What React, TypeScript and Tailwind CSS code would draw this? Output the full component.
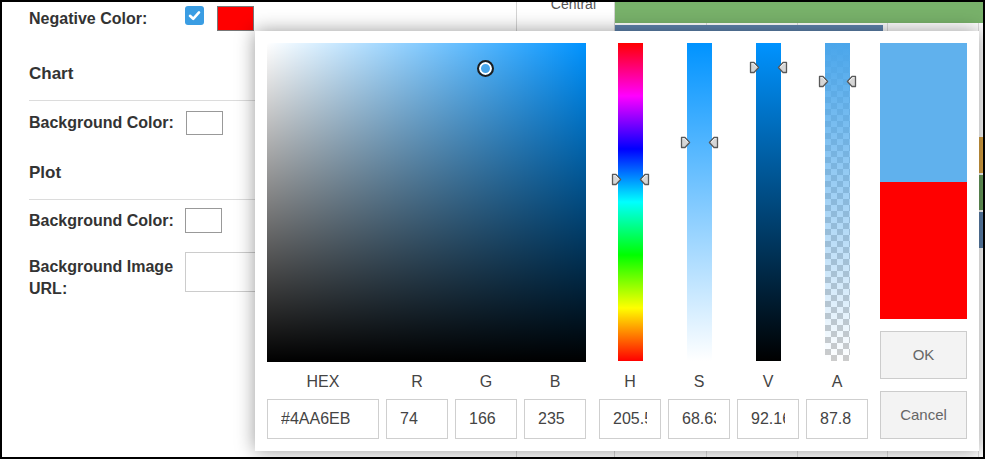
import React from 'react';

type SliderDef = { label: string; value: string; pos: number; bar: string; checker?: boolean };

const BAR_H = 318;
const SV = 319;

// picked colour #4AA6EB
const pick = { h: 205.531914893617, s: 68.6382978723404, v: 92.16, a: 87.8 };

const sliders: SliderDef[] = [
  {
    label: 'H',
    value: String(pick.h),
    pos: (1 - pick.h / 360) * BAR_H,
    bar: 'bg-[image:linear-gradient(to_bottom,#f00,#f0f,#00f,#0ff,#0f0,#ff0,#f00)]',
  },
  {
    label: 'S',
    value: String(pick.s),
    pos: (1 - pick.s / 100) * BAR_H,
    bar: 'bg-[image:linear-gradient(to_bottom,#0093ff,#ffffff)]',
  },
  {
    label: 'V',
    value: '92.1607843137255',
    pos: (1 - pick.v / 100) * BAR_H,
    bar: 'bg-[image:linear-gradient(to_bottom,#0093ff,#000000)]',
  },
  {
    label: 'A',
    value: String(pick.a),
    pos: (1 - pick.a / 100) * BAR_H,
    bar: 'bg-[image:repeating-conic-gradient(#cccccc_0_25%,#ffffff_0_50%)] bg-[length:12px_12px]',
    checker: true,
  },
];

function Handle({ className, top }: { className: string; top: number }) {
  return (
    <svg width="11" height="13" viewBox="0 0 11 13" className={className} style={{ top }}>
      <path
        d="M1.5 1.5 H5 L9.6 6.5 L5 11.5 H1.5 Z"
        fill="#d6d6d6"
        stroke="#595959"
        strokeWidth="1.3"
        strokeLinejoin="round"
      />
      <path d="M2.5 2.7 H4.6 L7.8 6.2" fill="none" stroke="#f7f7f7" strokeWidth="1" />
    </svg>
  );
}

function SliderBar({ s }: { s: SliderDef }) {
  return (
    <div className="relative h-[318px] w-[25px]">
      <div className={`h-full w-full ${s.bar}`} />
      {s.checker && (
        <div className="absolute inset-0 bg-[image:linear-gradient(to_bottom,rgb(74,166,235),rgba(74,166,235,0))]" />
      )}
      <Handle className="absolute left-[-7px]" top={s.pos - 6.5} />
      <Handle className="absolute left-[21px] -scale-x-100" top={s.pos - 6.5} />
    </div>
  );
}

function Field({ label, value }: { label: string; value: string }) {
  return (
    <div className="flex w-full flex-col">
      <div className="h-[37px] pt-[11px] text-center text-[16px] leading-[18px] text-[#444]">{label}</div>
      <input
        readOnly
        value={value}
        className="h-[40px] w-full min-w-0 border border-[#cfcfcf] bg-white px-[13px] text-[16px] text-[#444] outline-none"
      />
    </div>
  );
}

function ColorPicker() {
  return (
    <div className="absolute left-[253px] top-[29px] flex h-[420px] w-[724px] bg-white p-[12px] shadow-[0_0_18px_rgba(0,0,0,0.4)]">
      <div className="flex w-[319px] flex-col">
        <div className="relative h-[319px] w-[319px] bg-[#0093ff] bg-[image:linear-gradient(to_top,#000,transparent),linear-gradient(to_right,#fff,transparent)]">
          <span
            className="absolute h-[17px] w-[17px] rounded-full border-[2.5px] border-[#1e1e1e] shadow-[inset_0_0_0_2px_#fff]"
            style={{ left: (pick.s / 100) * SV - 8.5, top: (1 - pick.v / 100) * SV - 8.5 }}
          />
        </div>
        <div className="grid grid-cols-[112px_62px_62px_62px] gap-x-[7px]">
          <Field label="HEX" value="#4AA6EB" />
          <Field label="R" value="74" />
          <Field label="G" value="166" />
          <Field label="B" value="235" />
        </div>
      </div>

      <div className="ml-[13px] grid grid-cols-[62px_62px_62px_62px] gap-x-[7px]">
        {sliders.map(s => (
          <div key={s.label} className="flex flex-col items-center">
            <div className="h-[319px]">
              <SliderBar s={s} />
            </div>
            <Field label={s.label} value={s.value} />
          </div>
        ))}
      </div>

      <div className="ml-[12px] flex w-[87px] flex-col">
        <div className="h-[139px] bg-[rgba(74,166,235,0.878)]" />
        <div className="h-[138px] bg-[#ff0000]" />
        <button className="mt-[12px] h-[48px] border border-[#cccccc] bg-[#f3f3f3] text-[15px] text-[#666]">OK</button>
        <button className="mt-[12px] h-[48px] border border-[#cccccc] bg-[#f3f3f3] text-[15px] text-[#666]">Cancel</button>
      </div>
    </div>
  );
}

function SettingsPanel() {
  return (
    <div className="h-full w-[515px] shrink-0 border-r border-[#d4d4d4] pl-[27px] text-[16px] font-bold text-[#333]">
      <div className="mt-[4px] flex h-[25px] items-center">
        <div className="w-[156px]">Negative Color:</div>
        <span className="flex h-[19px] w-[19px] self-start items-center justify-center rounded-[3px] bg-[#3a9de3]">
          <svg viewBox="0 0 19 19" className="h-[19px] w-[19px]">
            <path d="M5 9.8l3.2 3 5.8-6.4" fill="none" stroke="#fff" strokeWidth="2.6" strokeLinecap="round" strokeLinejoin="round" />
          </svg>
        </span>
        <span className="ml-[13px] h-[25px] w-[37px] border border-[#777] bg-[#ff0000]" />
      </div>

      <h3 className="mt-[32px] text-[17px] leading-[22px]">Chart</h3>
      <div className="mt-[15px] h-px bg-[#dcdcdc]" />
      <div className="mt-[10px] flex h-[24px] items-center">
        <div className="w-[157px]">Background Color:</div>
        <span className="h-[24px] w-[37px] border border-[#999] bg-white" />
      </div>

      <h3 className="mt-[27px] text-[17px] leading-[22px]">Plot</h3>
      <div className="mt-[15px] h-px bg-[#dcdcdc]" />
      <div className="mt-[8px] flex h-[25px] items-center">
        <div className="w-[156px]">Background Color:</div>
        <span className="h-[25px] w-[37px] border border-[#999] bg-white" />
      </div>
      <div className="mt-[19px] flex items-start">
        <div className="w-[156px] pt-[4px] leading-[22px]">Background Image URL:</div>
        <input readOnly className="h-[40px] w-[230px] border border-[#ccc] bg-white outline-none" />
      </div>
    </div>
  );
}

function ChartBackdrop() {
  return (
    <div className="flex h-full">
      <div className="w-[98px] border-r border-[#d4d4d4] pr-[18px] text-right">
        <div className="-mt-[6px] text-[14px] leading-[16px] font-normal text-[#555]">Central</div>
      </div>
      <svg width="368" height="455" viewBox="0 0 368 455" className="block">
        {[91, 182, 272, 363].map(x => (
          <line key={x} x1={x + 0.5} x2={x + 0.5} y1="0" y2="455" stroke="#dddddd" />
        ))}
        <rect x="0" y="-2" width="368" height="23" fill="#78b16a" />
        <rect x="0" y="23" width="268" height="6" fill="#5f84ae" />
        <rect x="0" y="135" width="368" height="36" fill="#d9a342" />
        <rect x="0" y="173" width="368" height="35" fill="#699c5d" />
        <rect x="0" y="210" width="368" height="36" fill="#5b80aa" />
      </svg>
    </div>
  );
}

export default function App() {
  return (
    <div className="relative flex h-[459px] w-[985px] overflow-hidden border-2 border-black bg-white font-['Liberation_Sans',Arial,sans-serif]">
      <SettingsPanel />
      <ChartBackdrop />
      <ColorPicker />
    </div>
  );
}
